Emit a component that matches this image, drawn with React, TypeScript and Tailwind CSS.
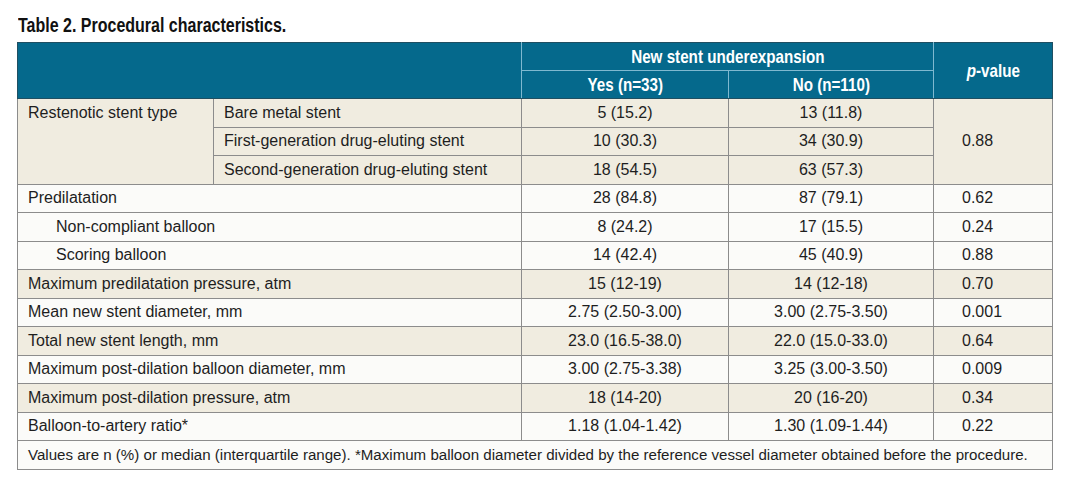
import React from "react";

type Row = { label: string; indent?: boolean; yes: string; no: string; p: string; beige: boolean };

const rows: Row[] = [
  { label: "Predilatation", yes: "28 (84.8)", no: "87 (79.1)", p: "0.62", beige: false },
  { label: "Non-compliant balloon", indent: true, yes: "8 (24.2)", no: "17 (15.5)", p: "0.24", beige: false },
  { label: "Scoring balloon", indent: true, yes: "14 (42.4)", no: "45 (40.9)", p: "0.88", beige: false },
  { label: "Maximum predilatation pressure, atm", yes: "15 (12-19)", no: "14 (12-18)", p: "0.70", beige: true },
  { label: "Mean new stent diameter, mm", yes: "2.75 (2.50-3.00)", no: "3.00 (2.75-3.50)", p: "0.001", beige: false },
  { label: "Total new stent length, mm", yes: "23.0 (16.5-38.0)", no: "22.0 (15.0-33.0)", p: "0.64", beige: true },
  { label: "Maximum post-dilation balloon diameter, mm", yes: "3.00 (2.75-3.38)", no: "3.25 (3.00-3.50)", p: "0.009", beige: false },
  { label: "Maximum post-dilation pressure, atm", yes: "18 (14-20)", no: "20 (16-20)", p: "0.34", beige: true },
  { label: "Balloon-to-artery ratio*", yes: "1.18 (1.04-1.42)", no: "1.30 (1.09-1.44)", p: "0.22", beige: false },
];

const stents = [
  { t: "Bare metal stent", yes: "5 (15.2)", no: "13 (11.8)" },
  { t: "First-generation drug-eluting stent", yes: "10 (30.3)", no: "34 (30.9)" },
  { t: "Second-generation drug-eluting stent", yes: "18 (54.5)", no: "63 (57.3)" },
];

function Cond({ children, origin = "center" }: { children: React.ReactNode; origin?: "center" | "left" }) {
  return (
    <span
      className={`inline-block whitespace-nowrap scale-x-[0.8] ${origin === "left" ? "origin-left" : "origin-center"}`}
    >
      {children}
    </span>
  );
}

export default function App() {
  const cell = "border border-[#8c8c8c] px-[10px] py-0 align-middle";
  const hline = "border border-[#1f4f62]";
  return (
    <div className="w-[1073px] h-[491px] bg-white text-[#1e1e1e] font-['Liberation_Sans',Arial,sans-serif]">
      <div className="pl-[18px] pt-[14px] h-[42px] text-[20px] font-bold leading-[22px] text-[#111]">
        <Cond origin="left">Table 2. Procedural characteristics.</Cond>
      </div>
      <table className="ml-[17px] border-collapse text-[16px] leading-[20px] table-fixed w-[1035px]">
        <colgroup>
          <col className="w-[196px]" />
          <col className="w-[308px]" />
          <col className="w-[207px]" />
          <col className="w-[205px]" />
          <col className="w-[119px]" />
        </colgroup>
        <thead>
          <tr className="h-[28px] bg-[#05698c] text-white text-[19px] font-bold">
            <th colSpan={2} rowSpan={2} className={`${hline} border-r-[#7fb9d0]`}></th>
            <th colSpan={2} className={`${hline} border-l-[#7fb9d0] border-b-[#7fb9d0] border-r-[#7fb9d0] text-center font-bold`}>
              <Cond>New stent underexpansion</Cond>
            </th>
            <th rowSpan={2} className={`${hline} border-l-[#7fb9d0] text-center font-bold`}>
              <Cond>
                <span className="italic">p</span>-value
              </Cond>
            </th>
          </tr>
          <tr className="h-[28px] bg-[#05698c] text-white text-[19px] font-bold">
            <th className={`${hline} border-l-[#7fb9d0] border-t-[#7fb9d0] border-r-[#7fb9d0] text-center font-bold`}>
              <Cond>Yes (n=33)</Cond>
            </th>
            <th className={`${hline} border-l-[#7fb9d0] border-t-[#7fb9d0] border-r-[#7fb9d0] text-center font-bold`}>
              <Cond>No (n=110)</Cond>
            </th>
          </tr>
        </thead>
        <tbody>
          {stents.map((s, i) => (
            <tr key={s.t} className="h-[28.5px] bg-[#f0ece0]">
              {i === 0 && (
                <td rowSpan={3} className={`${cell} align-top pt-[4px]`}>
                  Restenotic stent type
                </td>
              )}
              <td className={cell}>{s.t}</td>
              <td className={`${cell} text-center`}>{s.yes}</td>
              <td className={`${cell} text-center`}>{s.no}</td>
              {i === 0 && (
                <td rowSpan={3} className={`${cell} text-left pl-[28px]`}>
                  0.88
                </td>
              )}
            </tr>
          ))}
          {rows.map((r) => (
            <tr key={r.label} className={`h-[28.5px] ${r.beige ? "bg-[#f0ece0]" : "bg-[#fbfbf9]"}`}>
              <td colSpan={2} className={`${cell} ${r.indent ? "pl-[38px]" : ""}`}>
                {r.label}
              </td>
              <td className={`${cell} text-center`}>{r.yes}</td>
              <td className={`${cell} text-center`}>{r.no}</td>
              <td className={`${cell} text-left pl-[28px]`}>{r.p}</td>
            </tr>
          ))}
          <tr className="h-[28.5px] bg-[#fbfbf9]">
            <td colSpan={5} className={`${cell} whitespace-nowrap text-[15.1px]`}>
              Values are n (%) or median (interquartile range). *Maximum balloon diameter divided by the reference vessel diameter obtained before the procedure.
            </td>
          </tr>
        </tbody>
      </table>
    </div>
  );
}
